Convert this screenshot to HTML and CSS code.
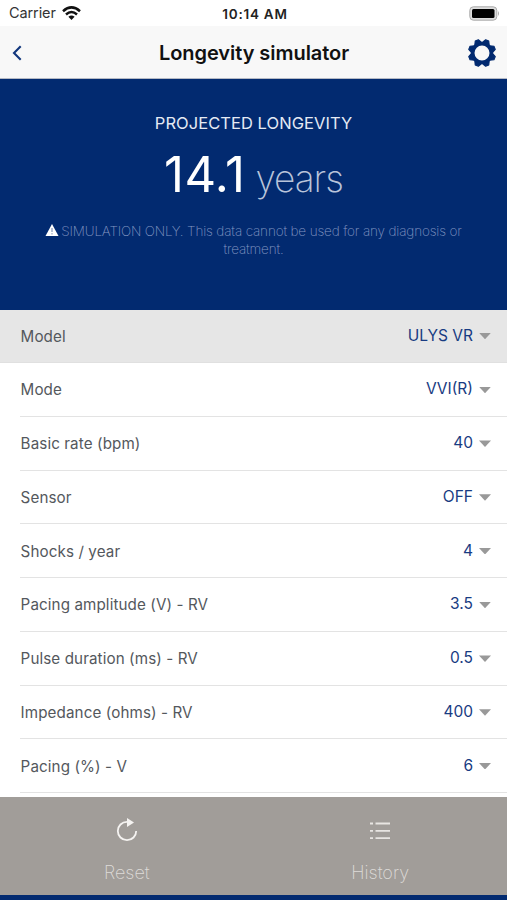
FILE: index.html
```html
<!DOCTYPE html>
<html lang="en">
<head>
<meta charset="utf-8">
<title>Longevity simulator</title>
<link rel="stylesheet" href="styles.css">
</head>
<body>
<div class="screen">
  <header class="status">
    <div class="carrier"><span>Carrier</span>
      <svg width="19" height="14" viewBox="0 0 19 14" fill="none" stroke="#111" stroke-width="2.5"><path d="M1 5.2Q9.5-2.4 18 5.2M4 8.5Q9.5 3.6 15 8.5"/><path d="M6.4 10.8Q9.5 8 12.6 10.8L9.5 14Z" fill="#111" stroke="none"/></svg>
    </div>
    <span class="time">10:14 AM</span>
    <svg class="battery" width="31" height="15" viewBox="0 0 31 15"><rect x=".8" y=".8" width="27" height="13.4" rx="3.6" fill="#ddd" stroke="#aaa"/><rect x="3" y="3" width="22.5" height="9" rx="1.5" fill="#000"/><path d="M29 5q2 2.5 0 5z" fill="#aaa"/></svg>
  </header>
  <nav class="nav">
    <svg width="10" height="16" viewBox="0 0 10 16" fill="none" stroke="#12377d" stroke-width="2.1"><path d="M8.7 1.2L2 8l6.700 6.800"/></svg>
    <h1>Longevity simulator</h1>
    <svg width="30" height="30" viewBox="-15 -15 30 30" fill="#022a70" stroke="#022a70">
      <circle r="9.300" fill="none" stroke-width="3.600"/>
      <g stroke-width="1" stroke-linejoin="round">
        <path id="tooth" d="M-3.800-9.800L-1.700-13.700H1.700L3.800-9.800Z" transform="rotate(22.500)"/>
        <use href="#tooth" transform="rotate(45)"/><use href="#tooth" transform="rotate(90)"/><use href="#tooth" transform="rotate(135)"/><use href="#tooth" transform="rotate(180)"/><use href="#tooth" transform="rotate(225)"/><use href="#tooth" transform="rotate(270)"/><use href="#tooth" transform="rotate(315)"/>
      </g>
    </svg>
  </nav>
  <section class="hero">
    <h2>PROJECTED LONGEVITY</h2>
    <p class="result"><span class="number">14.1</span><span class="unit">years</span></p>
    <p class="note"><svg width="14" height="12" viewBox="0 0 14 12"><path d="M7 0L13.500 12H.5Z" fill="#fff"/><path d="M7 4v4M7 9.200v1.200" stroke="#6f82a9" stroke-width="1"/></svg><span>SIMULATION ONLY. This data cannot be used for any diagnosis or</span><br>treatment.</p>
  </section>
  <main class="rows">
    <div class="row model"><span>Model</span><b>ULYS VR</b><i></i></div>
    <div class="row"><span>Mode</span><b>VVI(R)</b><i></i></div>
    <div class="row"><span>Basic rate (bpm)</span><b>40</b><i></i></div>
    <div class="row"><span>Sensor</span><b>OFF</b><i></i></div>
    <div class="row"><span>Shocks / year</span><b>4</b><i></i></div>
    <div class="row"><span>Pacing amplitude (V) - RV</span><b>3.5</b><i></i></div>
    <div class="row"><span>Pulse duration (ms) - RV</span><b>0.5</b><i></i></div>
    <div class="row"><span>Impedance (ohms) - RV</span><b>400</b><i></i></div>
    <div class="row"><span>Pacing (%) - V</span><b>6</b><i></i></div>
  </main>
  <footer class="actions">
    <div><svg width="22" height="24" viewBox="0 0 22 24"><path d="M11 3.800A9.200 9.200 0 1 0 20.200 13" fill="none" stroke="#f5f3f1" stroke-width="1.800"/><path d="M11 0L18 4.500L11 9Z" fill="#f5f3f1"/></svg><span>Reset</span></div>
    <div><svg width="22" height="24" viewBox="0 0 22 24" stroke="#e8e5e2" stroke-width="1.800"><path d="M1 5.500h3M6.500 5.500H21M1 12.800h3M6.500 12.800H21M1 20.100h3M6.500 20.100H21"/></svg><span>History</span></div>
  </footer>
</div>
</body>
</html>
```
FILE: styles.css
```css
* { box-sizing: border-box; }
body { margin: 0; background: #022a70; font-family: Inter, sans-serif; }
h1, h2, p { margin: 0; font-weight: 400; }
.screen { width: 507px; height: 900px; display: flex; flex-direction: column; overflow: hidden; }
.status { height: 26px; flex: none; display: grid; grid-template-columns: 1fr auto 1fr; align-items: center; padding: 2px 7px 0 9px; background: #fff; }
.carrier { display: flex; align-items: center; gap: 6px; font-size: 14.500px; line-height: 18px; color: #333; letter-spacing: -.1px; }
.carrier span { margin-top: -2px; }
.carrier svg { margin-top: -3px; }
.time { font-size: 13.500px; font-weight: 600; color: #222; letter-spacing: .75px; margin-right: -1px; }
.battery { justify-self: end; margin-top: -2px; }
.nav { height: 53px; flex: none; display: grid; grid-template-columns: 30px 1fr 30px; align-items: center; padding: 1px 10px 0 12px; background: #f8f8f8; border-bottom: 1px solid #b5bac5; }
.nav h1 { text-align: center; font-size: 20px; font-weight: 600; color: #111; letter-spacing: -.05px; margin-left: -1px; }
.hero { height: 231px; flex: none; padding-top: 32px; background: #022a70; color: #e5eaf4; text-align: center; }
.hero h2 { font-size: 16.500px; line-height: 24px; letter-spacing: .05px; }
.result { height: 62px; margin-top: 7px; line-height: 66px; white-space: nowrap; }
.number { color: #fff; font-size: 49px; letter-spacing: .4px; }
.unit { margin-left: 10px; color: #b9c4da; font-size: 37px; font-weight: 200; letter-spacing: -1px; }
.note { margin-top: 19px; font-size: 13.500px; line-height: 17.500px; font-weight: 200; letter-spacing: -.15px; color: #8498c2; }
.note svg { margin-right: 2px; }
.rows { height: 487px; flex: none; overflow: hidden; background: #fff; }
.row { height: 53.750px; margin-left: 20px; display: flex; align-items: center; padding: 1px 16px 0 .6px; border-bottom: 1px solid #e3e3e3; font-size: 15.200px; color: #54585d; letter-spacing: .1px; }
.row.model { height: 53px; margin-left: 0; padding: 0 16px 0 20.600px; background: #e6e6e6; border-color: #e0e0e0; }
.row b { margin: -2px 0 0 auto; font-weight: 400; font-size: 15.500px; letter-spacing: 0; color: #183b82; }
.row i { width: 12px; height: 6.500px; margin-left: 6px; background: #999; clip-path: polygon(0 0, 100% 0, 50% 100%); }
.actions { height: 98px; flex: none; display: grid; grid-template-columns: 1fr 1fr; background: #a19d99; }
.actions div { display: flex; flex-direction: column; align-items: center; padding-top: 21px; }
.actions span { margin-top: 17px; font-size: 18px; line-height: 28px; font-weight: 200; color: #dedbd8; }
```
